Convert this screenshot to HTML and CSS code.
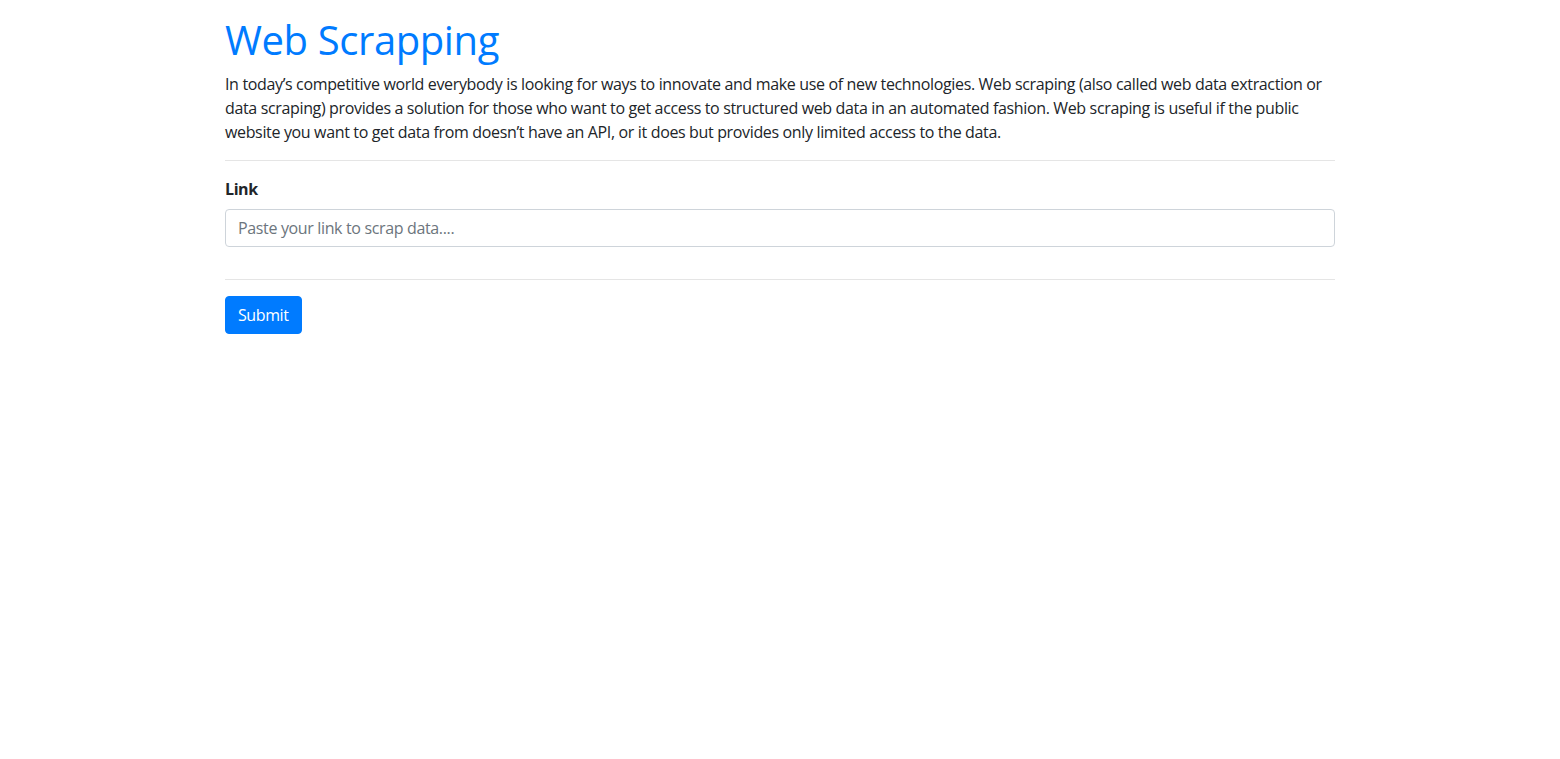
FILE: index.html
```html
<!DOCTYPE html>
<html lang="en">
<head>
<meta charset="utf-8">
<title>Web Scrapping</title>
<link rel="stylesheet" href="styles.css">
</head>
<body>
<div class="container">
  <h1 class="title">Web Scrapping</h1>
  <p class="lead-text">In today’s competitive world everybody is looking for ways to innovate and make use of new technologies. Web scraping (also called web data extraction or<br>data scraping) provides a solution for those who want to get access to structured web data in an automated fashion. Web scraping is useful if the public<br>website you want to get data from doesn’t have an API, or it does but provides only limited access to the data.</p>
  <hr class="divider">
  <form class="form">
    <div class="form-group">
      <label class="label" for="link">Link</label>
      <input class="input" id="link" type="text" placeholder="Paste your link to scrap data....">
    </div>
    <hr class="divider">
    <button class="btn" type="button">Submit</button>
  </form>
</div>
</body>
</html>
```
FILE: styles.css
```css
*{box-sizing:border-box}
body{margin:0;background:#fff;color:#212529;font-family:"Open Sans","Noto Sans",sans-serif;font-size:16px;line-height:1.5;letter-spacing:-0.35px}
.container{width:1140px;margin:0 auto;padding:16px 15px 0}
.title{margin:0 0 8px;font-size:40px;line-height:48px;font-weight:500;color:#007bff;letter-spacing:-0.4px}
.lead-text{margin:0 0 16px}
.divider{width:100%;margin:16px 0;border:0;border-top:1px solid rgba(0,0,0,.1);height:0}
.form{margin:0;display:flex;flex-direction:column;align-items:flex-start}
.form-group{width:100%;margin-bottom:16px}
.label{display:inline-block;margin-bottom:8px;font-weight:700;letter-spacing:-0.4px}
.input{display:block;width:100%;height:38px;padding:6px 12px;font-family:inherit;font-size:16px;letter-spacing:-0.35px;line-height:1.5;color:#495057;background:#fff;border:1px solid #ced4da;border-radius:4px;outline:none}
.input::placeholder{color:#6c757d;opacity:1}
.btn{display:inline-block;height:38px;padding:6px 12px;font-family:inherit;font-size:16px;letter-spacing:-0.4px;line-height:1.5;color:#fff;background:#007bff;border:1px solid #007bff;border-radius:4px;cursor:pointer}
```
